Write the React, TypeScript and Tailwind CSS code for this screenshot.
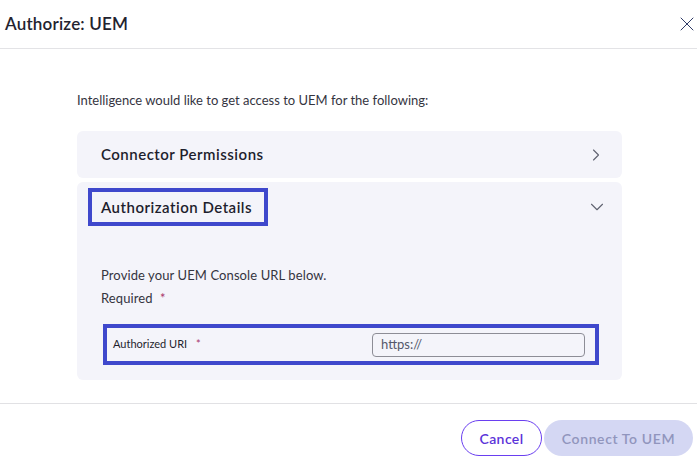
import { X, ChevronRight, ChevronDown } from 'lucide-react'

const font = { fontFamily: 'Lato, "Noto Sans", sans-serif' }

export default function App() {
  return (
    <div className="flex h-[458px] w-[697px] flex-col bg-white text-[#1e1e2d]" style={font}>
      {/* Header */}
      <div className="flex h-[49px] shrink-0 items-center justify-between border-b border-[#e3e3e6] pl-[5px]">
        <h1 className="text-[17px] font-semibold tracking-[0.2px] text-[#23232f]">Authorize: UEM</h1>
        <X className="mr-[-2px] size-[24px] text-[#2f3a66]" strokeWidth={1} />
      </div>

      {/* Body */}
      <div className="flex flex-1 flex-col">
        <div className="ml-[77px] mt-[42px] w-[545px]">
          <p className="text-[13px] leading-[18px] text-[#35353f]">
            Intelligence would like to get access to UEM for the following:
          </p>

          <div className="mt-[22px] flex flex-col gap-[4px]">
            {/* Connector Permissions */}
            <div className="flex h-[47px] items-center justify-between rounded-md bg-[#f4f4fa] pl-6 pr-[16px]">
              <span className="text-[15px] font-semibold tracking-[0.5px] text-[#1e1e2d]">Connector Permissions</span>
              <ChevronRight className="size-[20px] text-[#5f6270]" strokeWidth={1.3} />
            </div>

            {/* Authorization Details */}
            <div className="flex h-[198px] flex-col rounded-md bg-[#f4f4fa]">
              <div className="flex items-center justify-between pr-[14px] pt-[6px]">
                <div className="ml-[11px] flex h-[38px] items-center border-4 border-[#3f48cc] pl-[9px] pr-[12px]">
                  <span className="text-[15px] font-semibold tracking-[0.5px] text-[#1e1e2d]">Authorization Details</span>
                </div>
                <ChevronDown className="size-[22px] text-[#5f6270]" strokeWidth={1.2} />
              </div>

              <div className="pl-6 pt-[38px] text-[13px] leading-[23px] tracking-[0.1px] text-[#35353f]">
                <p>Provide your UEM Console URL below.</p>
                <p>
                  Required <span className="ml-[4px] text-[#a8356a]">*</span>
                </p>
              </div>

              <div className="ml-[26px] mt-[14px] flex h-[41px] w-[496px] items-center justify-between border-4 border-[#3f48cc] pl-[6px] pr-[10px]">
                <span className="text-[11px] text-[#1e1e2d]">
                  Authorized URI <span className="ml-[6px] text-[#a8356a]">*</span>
                </span>
                <div className="flex h-[24px] w-[213px] items-center rounded-[4px] border border-[#8d8d96] px-[8px] text-[13px] text-[#55586a]">
                  https://
                </div>
              </div>
            </div>
          </div>
        </div>

        {/* Footer */}
        <div className="mt-auto flex h-[55px] items-start justify-end gap-[2px] border-t border-[#e1e1e4] pr-[4px] pt-[16px]">
          <button className="h-[36px] w-[81px] rounded-full border border-[#6a3ff0] text-[14px] font-semibold tracking-[0.4px] text-[#5b33d9]">
            Cancel
          </button>
          <button className="h-[36px] w-[149px] rounded-full bg-[#d4d7f3] text-[14px] font-semibold tracking-[0.6px] text-[#9195bd]">
            Connect To UEM
          </button>
        </div>
      </div>
    </div>
  )
}
